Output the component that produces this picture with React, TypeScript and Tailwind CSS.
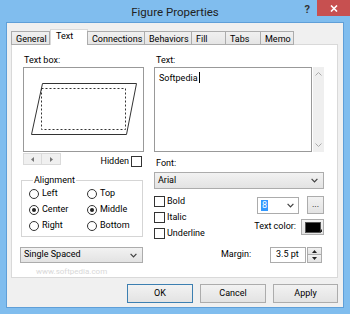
import type { ReactNode } from 'react'

function Chevron() {
  return (
    <svg width="7" height="5" viewBox="0 0 7 5" className="shrink-0">
      <path d="M0.6 0.8 3.5 3.8 6.4 0.8" fill="none" stroke="#404040" strokeWidth="1.2" />
    </svg>
  )
}

function Radio({ label, checked }: { label: string; checked?: boolean }) {
  return (
    <div className="flex h-[16px] items-center gap-[3px]">
      <span className="flex h-[10px] w-[10px] items-center justify-center rounded-full border border-[#333] bg-white">
        {checked && <span className="h-[4px] w-[4px] rounded-full bg-[#222]" />}
      </span>
      {label}
    </div>
  )
}

function Check({ label }: { label: string }) {
  return (
    <div className="flex h-[16px] items-start gap-[2px]">
      <span className="h-[11px] w-[11px] border border-[#333] bg-white" />
      <span className="leading-[11px]">{label}</span>
    </div>
  )
}

function Btn({ children, className = '' }: { children: ReactNode; className?: string }) {
  return (
    <div
      className={`flex items-center justify-center border bg-linear-to-b from-[#f2f2f2] to-[#e3e3e3] ${className}`}
    >
      {children}
    </div>
  )
}

function Select({ value, className = '' }: { value: string; className?: string }) {
  return (
    <div
      className={`flex items-center justify-between border border-[#acacac] bg-linear-to-b from-[#f2f2f2] to-[#e3e3e3] pl-[3px] pr-[5px] ${className}`}
    >
      <span>{value}</span>
      <Chevron />
    </div>
  )
}

const tabs = [
  { name: 'General', w: 'w-[39px]' },
  { name: 'Text', w: 'w-[38px]', active: true },
  { name: 'Connections', w: 'w-[58px]' },
  { name: 'Behaviors', w: 'w-[48px]' },
  { name: 'Fill', w: 'w-[35px]' },
  { name: 'Tabs', w: 'w-[36px]' },
  { name: 'Memo', w: 'w-[34px]' },
]

export default function App() {
  return (
    <div className="flex h-[314px] w-[350px] flex-col bg-[#80bdee] px-[6px] pb-[6px] font-['Roboto',sans-serif] text-[9px] text-black">
      {/* title bar */}
      <div className="grid h-[22px] shrink-0 grid-cols-[1fr_auto_1fr] items-start">
        <div />
        <div className="pt-[4px] text-[11.5px] leading-[16px] text-[#222]">Figure Properties</div>
        <div className="flex items-start justify-end">
          <span className="mr-[7px] mt-[3px] text-[11px] font-bold leading-[14px] text-[#333]">?</span>
          <div className="mr-[-6px] flex h-[16px] w-[33px] items-center justify-center bg-[#c75050]">
            <svg width="8" height="7" viewBox="0 0 8 7">
              <path d="M1 0.5 7 6.5M7 0.5 1 6.5" stroke="#fff" strokeWidth="1.6" />
            </svg>
          </div>
        </div>
      </div>

      {/* client area */}
      <div className="flex flex-1 flex-col border border-[#5f9fd8] bg-[#f0f0f0] pl-[4px] pr-[4px] pt-[6px]">
        {/* tabs */}
        <div className="z-10 mb-[-1px] flex h-[16px] items-end">
          {tabs.map((t) =>
            t.active ? (
              <div
                key={t.name}
                className={`${t.w} h-[16px] border border-b-0 border-[#d9d9d9] bg-white pl-[5px] leading-[13px]`}
              >
                {t.name}
              </div>
            ) : (
              <div
                key={t.name}
                className={`${t.w} -ml-px h-[14px] border border-[#acacac] bg-linear-to-b from-[#f0f0f0] to-[#e5e5e5] pl-[4px] leading-[14px] first:ml-0`}
              >
                {t.name}
              </div>
            ),
          )}
        </div>

        {/* tab panel */}
        <div className="flex h-[234px] w-[327px] border border-[#d9d9d9] bg-white pl-[9px] pt-[9px]">
          {/* left column */}
          <div className="flex w-[123px] flex-col">
            <div className="ml-[3px] h-[13px] leading-[12px]">Text box:</div>
            <div className="ml-[2px] h-[85px] w-[121px] border border-[#999] bg-white">
              <svg width="119" height="83" viewBox="0 0 119 83">
                <path d="M18.5 15.5 112.5 15.5 102.5 66.5 7.5 66.5Z" fill="none" stroke="#333" strokeWidth="1" />
                <rect x="17.5" y="20.5" width="84" height="41" fill="none" stroke="#333" strokeWidth="1" strokeDasharray="2 2" />
              </svg>
            </div>
            <div className="mt-[1px] flex h-[14px] items-start justify-between">
              <div className="ml-[2px] flex h-[12px]">
                <div className="flex w-[19px] items-center justify-center border border-[#dadada] bg-[#f0f0f0]">
                  <svg width="3" height="5" viewBox="0 0 3 5"><path d="M3 0 0 2.5 3 5Z" fill="#777" /></svg>
                </div>
                <div className="flex w-[19px] items-center justify-center border border-l-0 border-[#dadada] bg-[#f0f0f0]">
                  <svg width="3" height="5" viewBox="0 0 3 5"><path d="M0 0 3 2.5 0 5Z" fill="#777" /></svg>
                </div>
              </div>
              <div className="mr-[2px] mt-[3px] flex items-center gap-[2px]">
                <span className="leading-[11px]">Hidden</span>
                <span className="h-[11px] w-[11px] border border-[#333] bg-white" />
              </div>
            </div>

            <fieldset className="mt-[7px] h-[63px] w-[122px] border border-[#d5d5d5] pl-[7px]">
              <legend className="ml-[4px] px-[1px] leading-[12px]">Alignment</legend>
              <div className="grid grid-cols-[58px_1fr]">
                <Radio label="Left" />
                <Radio label="Top" />
                <Radio label="Center" checked />
                <Radio label="Middle" checked />
                <Radio label="Right" />
                <Radio label="Bottom" />
              </div>
            </fieldset>

            <Select value="Single Spaced" className="ml-[-1px] mt-[10px] h-[16px] w-[123px]" />
            <div className="ml-[15px] mt-[4px] text-[8px] leading-[10px] text-[#d8d8d8]">www.softpedia.com</div>
          </div>

          {/* right column */}
          <div className="ml-[10px] flex w-[170px] flex-col">
            <div className="ml-[2px] h-[13px] leading-[12px]">Text:</div>
            <div className="flex h-[85px]">
              <div className="w-[158px] border border-[#999] bg-white px-[4px] pt-[2px] leading-[12px]">
                <span>Softpedia</span>
                <span className="ml-px inline-block h-[11px] w-px translate-y-[2px] bg-black" />
              </div>
              <div className="ml-px flex w-[11px] flex-col items-center justify-between bg-[#efefef] py-[5px]">
                <svg width="7" height="4" viewBox="0 0 7 4"><path d="M0.5 3.5 3.5 0.5 6.5 3.5" fill="none" stroke="#aaa" /></svg>
                <svg width="7" height="4" viewBox="0 0 7 4"><path d="M0.5 0.5 3.5 3.5 6.5 0.5" fill="none" stroke="#aaa" /></svg>
              </div>
            </div>
            <div className="ml-[2px] mt-[5px] h-[12px] leading-[12px]">Font:</div>
            <Select value="Arial" className="mt-[3px] h-[17px] w-[170px]" />

            <div className="mt-[7px] flex h-[48px]">
              <div className="flex flex-col">
                <Check label="Bold" />
                <Check label="Italic" />
                <Check label="Underline" />
              </div>
              <div className="ml-auto flex flex-col items-end">
                <div className="flex items-start">
                  <div className="mt-px flex h-[17px] w-[42px] items-center justify-between border border-[#acacac] bg-white pl-[3px] pr-[4px]">
                    <span className="bg-[#3399ff] px-[1px] leading-[11px] text-white">8</span>
                    <Chevron />
                  </div>
                  <Btn className="ml-[8px] h-[18px] w-[17px] border-[#acacac] pb-[3px] leading-[10px]">...</Btn>
                </div>
                <div className="mt-[5px] flex items-center">
                  <span className="mr-[5px]">Text color:</span>
                  <Btn className="relative h-[16px] w-[23px] border-[#acacac]">
                    <span className="h-[11px] w-[16px] border border-[#555] bg-black" />
                    <svg width="3" height="3" viewBox="0 0 3 3" className="absolute bottom-[2px] right-[1px]">
                      <path d="M3 0 3 3 0 3Z" fill="#222" />
                    </svg>
                  </Btn>
                </div>
              </div>
            </div>

            <div className="mt-[3px] flex h-[16px] items-center">
              <span className="ml-[67px]">Margin:</span>
              <div className="ml-auto flex h-[16px] w-[36px] items-center border border-[#acacac] bg-white pl-[5px]">
                3.5 pt
              </div>
              <div className="ml-px mr-[2px] flex h-[16px] w-[15px] flex-col">
                <Btn className="h-[8px] border-[#acacac]">
                  <svg width="5" height="3" viewBox="0 0 5 3"><path d="M0 3 2.5 0 5 3Z" fill="#222" /></svg>
                </Btn>
                <Btn className="h-[8px] border-t-0 border-[#acacac]">
                  <svg width="5" height="3" viewBox="0 0 5 3"><path d="M0 0 2.5 3 5 0Z" fill="#222" /></svg>
                </Btn>
              </div>
            </div>
          </div>
        </div>

        {/* dialog buttons */}
        <div className="mt-[6px] flex justify-end gap-[7px] pr-[1px]">
          <Btn className="h-[19px] w-[66px] border-[#3c7fb1]">OK</Btn>
          <Btn className="h-[19px] w-[66px] border-[#acacac]">Cancel</Btn>
          <Btn className="h-[19px] w-[65px] border-[#acacac]">Apply</Btn>
        </div>
      </div>
    </div>
  )
}
